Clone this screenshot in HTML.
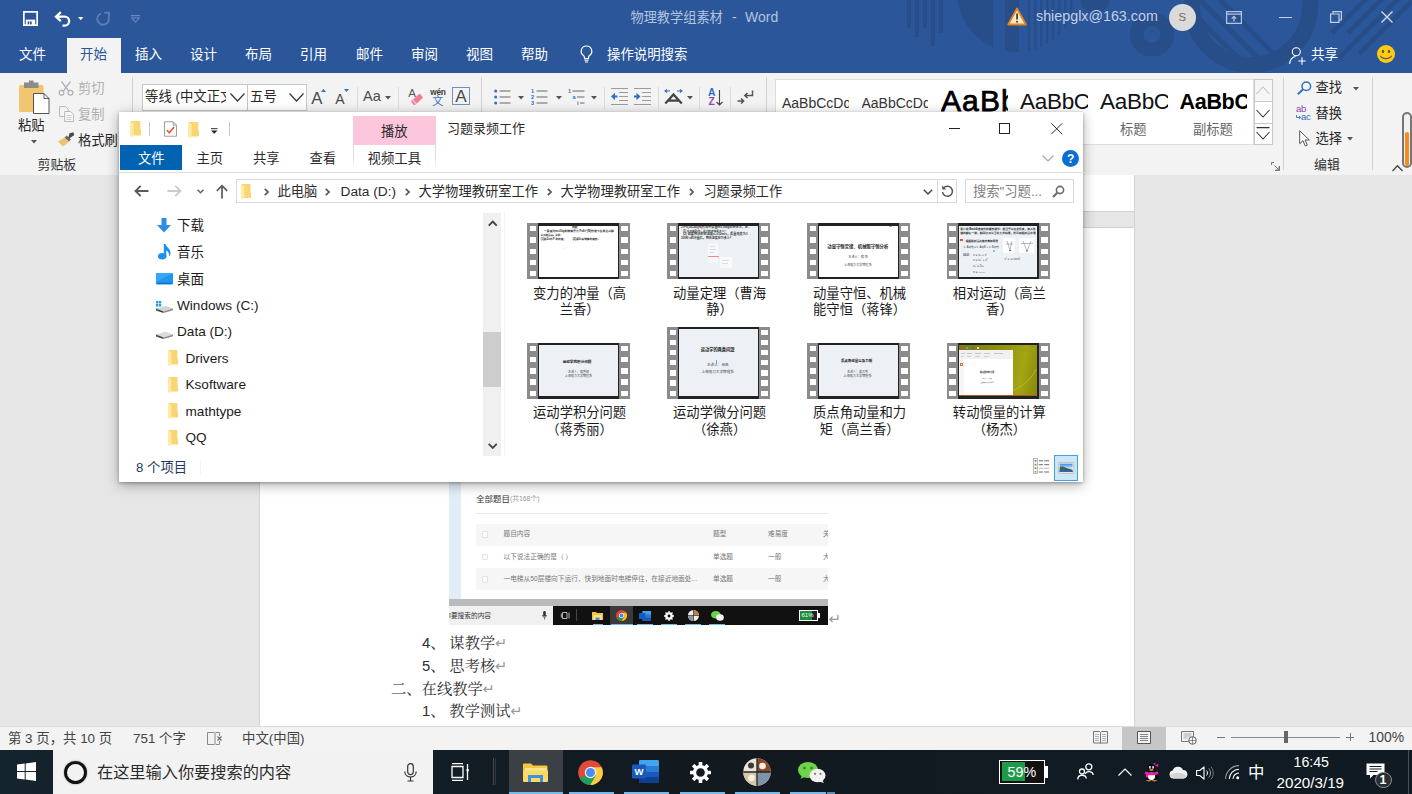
<!DOCTYPE html>
<html lang="zh-CN">
<head>
<meta charset="utf-8">
<title>物理教学组素材 - Word</title>
<style>
*{box-sizing:border-box;margin:0;padding:0}
html,body{width:1412px;height:794px;overflow:hidden;background:#e6e6e6}
body{font-family:"Liberation Sans","Noto Sans CJK SC",sans-serif;font-size:13.4px;color:#222;position:relative}
.abs{position:absolute}
.t{position:absolute;white-space:nowrap;line-height:1}
svg{position:absolute;overflow:visible}
/* ---------- Word title ---------- */
#title{left:0;top:0;width:1412px;height:72.500px;background:#2b579a;overflow:hidden}
#title .t{color:#fff}
.wtab{position:absolute;top:47.500px;font-size:14.6px;color:#fff;white-space:nowrap;line-height:1}
#seltab{left:67px;top:37.500px;width:53.500px;height:36px;background:#f3f3f3}
/* ---------- ribbon ---------- */
#ribbon{left:0;top:72px;width:1412px;height:103.500px;background:#f3f3f3;border-bottom:1px solid #d5d5d5}
.vsep{position:absolute;width:1px;background:#d2d2d2}
/* ---------- doc ---------- */
#doc{left:0;top:175px;width:1412px;height:551px;background:#e6e6e6}
#page{left:260px;top:0;width:873.500px;height:551px;background:#fff;box-shadow:-1px 0 0 #d4d4d4,1px 0 0 #d4d4d4}
.dl{position:absolute;white-space:nowrap;line-height:1;font-family:"Liberation Serif","Noto Serif CJK SC",serif;font-size:15.3px;color:#2e2e2e}
.pm{color:#9a9a9a;font-family:"DejaVu Sans",sans-serif;font-size:14.500px;line-height:1}
.dg{font-family:"Liberation Sans",sans-serif;font-size:14.800px}
/* ---------- status ---------- */
#status{left:0;top:726px;width:1412px;height:24px;background:#f3f3f3;border-top:1px solid #dcdcdc}
#status .t{color:#444;font-size:13.4px;top:5px}
/* ---------- taskbar ---------- */
#task{left:0;top:750px;width:1412px;height:44px;background:linear-gradient(90deg,#14242e 0,#14212b 60px,#131d25 470px,#12191f 720px,#111b23 1100px,#101a22 100%)}
/* ---------- explorer ---------- */
#exp{left:119px;top:112px;width:964px;height:369.500px;background:#fff;box-shadow:0 1px 3px rgba(0,0,0,.28),0 3px 12px rgba(0,0,0,.32)}
#expi{left:0;top:-1px;width:964px;height:370.500px}
#exp .t{color:#2b2b2b}
.nav{position:absolute;white-space:nowrap;line-height:1;font-size:13.5px;color:#1a1a1a}
.fl{position:absolute;width:130px;text-align:center;font-size:13.3px;line-height:16.8px;color:#1a1a1a}
</style>
</head>
<body>

<!-- ================= WORD TITLE BAR + TABS ================= -->
<div id="title" class="abs">
<!-- decorative pattern -->
<svg style="left:0;top:0" width="1412" height="72" viewBox="0 0 1412 72">
  <g fill="#284e8a">
    <rect x="907" y="0" width="4" height="28"/><rect x="915" y="0" width="4" height="37"/><rect x="923" y="0" width="4" height="28"/><rect x="931" y="0" width="4" height="46"/><rect x="939" y="0" width="4" height="33"/>
    <clipPath id="cpA"><circle cx="1017" cy="-8" r="60"/></clipPath>
    <g clip-path="url(#cpA)">
      <rect x="950" y="0" width="43" height="60"/><rect x="1005" y="0" width="14" height="60"/>
      <rect x="1028" y="0" width="2.4" height="60"/><rect x="1034" y="0" width="2.4" height="60"/><rect x="1040" y="0" width="2.4" height="60"/><rect x="1046" y="0" width="2.4" height="60"/><rect x="1052" y="0" width="2.4" height="60"/><rect x="1058" y="0" width="2.4" height="60"/><rect x="1064" y="0" width="2.4" height="60"/><rect x="1070" y="0" width="2.4" height="60"/>
    </g>
    <circle cx="1095" cy="-2" r="15"/>
    <path d="M1152 12.5a22 22 0 1 0 .01 0zM1152 26a8.5 8.5 0 1 1 -.01 0z" fill-rule="evenodd"/>
    <path d="M1251 -61a67 67 0 1 0 .01 0zM1251 -45a51 51 0 1 1 -.01 0z" fill-rule="evenodd"/>
    <clipPath id="cpB"><circle cx="1251" cy="6" r="51"/></clipPath>
    <g clip-path="url(#cpB)" stroke="#284e8a" stroke-width="5" fill="none">
      <path d="M1190 -10L1290 90M1200 -20L1300 80M1180 0L1280 100M1170 10L1270 110"/>
    </g>
    <g stroke="#284e8a" stroke-width="4.600" fill="none">
      <path d="M1332 33L1370 -5M1348 33L1386 -5M1339 58L1402 -5M1359 54L1418 -5"/>
    </g>
  </g>
</svg>
<!-- QAT icons -->
<svg style="left:23px;top:10.500px" width="15" height="15" viewBox="0 0 15 15"><path d="M.850 .850h13.300v13.300H.850z" fill="none" stroke="#fff" stroke-width="1.700"/><rect x="2.800" y="8.600" width="9.400" height="6" fill="#fff"/><rect x="4.600" y="10.400" width="1.700" height="3" fill="#2b579a"/><rect x="7" y="10.400" width="1.700" height="3" fill="#2b579a"/></svg>
<svg style="left:54px;top:10.500px" width="18" height="16" viewBox="0 0 18 16"><path d="M6.800 1.200L2 5.700l4.800 4.500M2.300 5.700h8.200a4.500 4.500 0 0 1 .3 9H8.500" fill="none" stroke="#fff" stroke-width="2.300"/></svg>
<svg style="left:78px;top:16.800px" width="5.500" height="3.500" viewBox="0 0 6 4"><path d="M0 0h6L3 3.600z" fill="#fff"/></svg>
<svg style="left:95px;top:11px" width="16" height="15" viewBox="0 0 16 15"><path d="M5.800 2.600A5.800 5.800 0 1 0 13.600 6.200" fill="none" stroke="#5d7db9" stroke-width="1.900"/><path d="M9.300 1.600H14V6.300" fill="none" stroke="#5d7db9" stroke-width="1.900"/></svg>
<svg style="left:131px;top:14.500px" width="9" height="8" viewBox="0 0 9 8"><path d="M0 .600h9M.800 3h7.400L4.500 7z" fill="none" stroke="#6b89bf" stroke-width="1.100"/></svg>
<!-- title -->
<div class="t" style="left:630.500px;top:10.500px;font-size:13.200px;color:#b4c4df">物理教学组素材</div><div class="t" style="left:732px;top:10px;font-size:14px;color:#b4c4df">-</div><div class="t" style="left:745px;top:10px;font-size:14px;color:#b4c4df">Word</div>
<!-- account -->
<svg style="left:1007px;top:7px" width="20" height="19" viewBox="0 0 20 19"><path d="M10 1.5L18.8 17.5H1.2z" fill="#fce9c8" stroke="#e8851a" stroke-width="1.8" stroke-linejoin="round"/><rect x="9.2" y="6.5" width="1.7" height="6" fill="#3a3a3a"/><rect x="9.2" y="13.8" width="1.7" height="1.8" fill="#3a3a3a"/></svg>
<div class="t" style="left:1036px;top:9px;font-size:14.3px;color:#c4d0e6">shiepglx@163.com</div>
<div class="abs" style="left:1169px;top:4px;width:27px;height:27px;border-radius:50%;background:#dadada"></div>
<div class="t" style="left:1178.5px;top:11.5px;font-size:11.5px;color:#7a6a5a">S</div>
<!-- window buttons -->
<svg style="left:1226px;top:11px" width="16" height="13" viewBox="0 0 16 13"><path d="M.6.6h14.8v11.8H.6zM.6 3.2h14.8" fill="none" stroke="#b7c6e0" stroke-width="1.2"/><path d="M8 10.5V5.5M5.8 7.6L8 5.4l2.2 2.2" fill="none" stroke="#b7c6e0" stroke-width="1.2"/></svg>
<div class="abs" style="left:1279px;top:17px;width:13px;height:1.3px;background:#c3d0e6"></div>
<svg style="left:1330px;top:11px" width="12" height="12" viewBox="0 0 12 12"><path d="M.6 3h8.4v8.4H.6zM3 3V.6h8.4V9H9" fill="none" stroke="#c3d0e6" stroke-width="1.2"/></svg>
<svg style="left:1381px;top:11px" width="12" height="12" viewBox="0 0 12 12"><path d="M.5.5l11 11M11.500 .5l-11 11" fill="none" stroke="#d5def0" stroke-width="1.3"/></svg>
<!-- tabs -->
<div id="seltab" class="abs"></div>
<div class="wtab" style="left:19px;font-size:13.5px">文件</div>
<div class="wtab" style="left:80px;font-size:13.5px;color:#2b579a">开始</div>
<div class="wtab" style="left:135px;font-size:13.5px">插入</div>
<div class="wtab" style="left:190px;font-size:13.5px">设计</div>
<div class="wtab" style="left:245px;font-size:13.5px">布局</div>
<div class="wtab" style="left:300px;font-size:13.5px">引用</div>
<div class="wtab" style="left:356px;font-size:13.5px">邮件</div>
<div class="wtab" style="left:411px;font-size:13.5px">审阅</div>
<div class="wtab" style="left:466px;font-size:13.5px">视图</div>
<div class="wtab" style="left:521px;font-size:13.5px">帮助</div>
<svg style="left:580px;top:45px" width="13" height="18" viewBox="0 0 13 18"><path d="M6.5 1a5.2 5.2 0 0 0-3 9.5c.7.6 1 1.300 1 2.300v.7h4v-.7c0-1 .3-1.700 1-2.300A5.200 5.200 0 0 0 6.500 1z" fill="none" stroke="#fff" stroke-width="1.2"/><path d="M4.500 15.200h4M5 17h3" stroke="#fff" stroke-width="1.200" fill="none"/></svg>
<div class="wtab" style="left:607px;font-size:13.4px">操作说明搜索</div>
<svg style="left:1288.500px;top:47px" width="18" height="18" viewBox="0 0 18 18"><circle cx="7.300" cy="4.800" r="4" fill="none" stroke="#fff" stroke-width="1.100"/><path d="M.600 17c.300-4.500 2.800-7 6-7.500" fill="none" stroke="#fff" stroke-width="1.100"/><path d="M13 10.200v7.500M9.300 14h7.400" stroke="#fff" stroke-width="1.100"/></svg>
<div class="wtab" style="left:1311px;font-size:13.5px">共享</div>
<svg style="left:1376.200px;top:44.300px" width="20" height="20" viewBox="0 0 20 20"><circle cx="10" cy="10" r="9" fill="#fecb12"/><ellipse cx="7" cy="7.500" rx="1.200" ry="1.700" fill="#5c5848"/><ellipse cx="13" cy="7.500" rx="1.200" ry="1.700" fill="#5c5848"/><path d="M4.300 11.800c1.700 3.700 9.700 3.700 11.400 0" fill="none" stroke="#5c5848" stroke-width="1.100"/></svg>

</div>

<!-- ================= RIBBON ================= -->
<div id="ribbon" class="abs">
<!-- coordinates inside ribbon: y = pageY-72 -->
<div class="abs" style="left:0;top:0;width:67px;height:.600px;background:#2b579a"></div><div class="abs" style="left:120.500px;top:0;width:1291.500px;height:.600px;background:#2b579a"></div>
<!-- Clipboard group -->
<svg style="left:18px;top:8px" width="33" height="35" viewBox="0 0 33 35">
  <rect x="1" y="5" width="24.500" height="27" rx="1.500" fill="#f0c66e"/>
  <rect x="6" y="2.500" width="14.500" height="5.500" fill="#8c8c8c"/><rect x="11" y="0.500" width="4.500" height="4" fill="#8c8c8c"/>
  <path d="M15.500 13.500h10.500l5 5v15h-15.500z" fill="#fff" stroke="#555" stroke-width="1"/><path d="M26 13.500v5h5" fill="none" stroke="#555" stroke-width="1"/>
</svg>
<div class="t" style="left:18px;top:46.600px;font-size:13.300px;color:#262626">粘贴</div>
<svg style="left:31px;top:68px" width="6" height="4" viewBox="0 0 6 4"><path d="M0 0h6L3 3.400z" fill="#555"/></svg>
<svg style="left:58px;top:9px" width="16" height="15" viewBox="0 0 16 15"><path d="M3.500 0.500l7.500 10M12.500 0.500l-7.500 10" stroke="#b3b3b3" stroke-width="1.300" fill="none"/><circle cx="3.500" cy="11.800" r="2.400" fill="none" stroke="#b3b3b3" stroke-width="1.300"/><circle cx="12.500" cy="11.800" r="2.400" fill="none" stroke="#b3b3b3" stroke-width="1.300"/></svg>
<div class="t" style="left:78px;top:9.500px;font-size:13.300px;color:#b1b1b1">剪切</div>
<svg style="left:59px;top:34px" width="16" height="16" viewBox="0 0 16 16"><path d="M.600 .600h6l2.500 2.500v7.500h-8.500z" fill="#f6f6f6" stroke="#b9b9b9" stroke-width="1"/><path d="M5.600 5.500h6l3 3v7h-9z" fill="#f6f6f6" stroke="#b9b9b9" stroke-width="1"/><path d="M7.500 9.500h5M7.500 11.500h5M7.500 13.500h5" stroke="#c9c9c9" stroke-width=".800"/></svg>
<div class="t" style="left:78px;top:35.500px;font-size:13.300px;color:#b1b1b1">复制</div>
<svg style="left:57px;top:60px" width="18" height="15" viewBox="0 0 18 15"><path d="M12.500 1.200l3.800 -1 1 2.800-6.500 4.500z" fill="#4a4a4a"/><path d="M9.500 3.500l4.500 4-2.200 2.200-4.300-4z" fill="#6a6a6a"/><path d="M7.500 5.500L12 9.800 6 14.500 1 9.500z" fill="#ecc275"/></svg>
<div class="t" style="left:78px;top:61.500px;font-size:13.300px;color:#262626">格式刷</div>
<div class="t" style="left:37.500px;top:87px;font-size:12.900px;color:#333">剪贴板</div>
<div class="vsep" style="left:132px;top:5px;height:93px"></div>

<!-- Font group -->
<div class="abs" style="left:142px;top:12px;width:106px;height:27px;background:#fff;border:1px solid #c6c6c6"></div>
<div class="abs" style="left:247px;top:12px;width:60px;height:27px;background:#fff;border:1px solid #c6c6c6"></div>
<div class="abs" style="left:144px;top:13px;width:82px;height:25px;overflow:hidden"><div class="t" style="left:1px;top:5px;font-size:13.400px;color:#262626">等线 (中文正文)</div></div>
<svg style="left:230px;top:21px" width="15" height="9" viewBox="0 0 15 9"><path d="M.500 .500l7 7.500 7-7.500" fill="none" stroke="#333" stroke-width="1.200"/></svg>
<div class="t" style="left:250px;top:18px;font-size:13.400px;color:#262626">五号</div>
<svg style="left:288.500px;top:21px" width="15" height="9" viewBox="0 0 15 9"><path d="M.500 .500l7 7.500 7-7.500" fill="none" stroke="#333" stroke-width="1.200"/></svg>
<div class="t" style="left:311.300px;top:18.600px;font-size:16.800px;color:#4a4a4a">A</div>
<svg style="left:320.800px;top:17.200px" width="5" height="3" viewBox="0 0 5 3"><path d="M0 3h5L2.500 0z" fill="#2e6fc4"/></svg>
<div class="t" style="left:335.300px;top:19.800px;font-size:14px;color:#4a4a4a">A</div>
<svg style="left:344.300px;top:17.200px" width="5" height="3" viewBox="0 0 5 3"><path d="M0 0h5L2.500 3z" fill="#2e6fc4"/></svg>
<div class="vsep" style="left:357px;top:15px;height:22px;background:#dcdcdc"></div>
<div class="t" style="left:363px;top:16.500px;font-size:14.500px;color:#4a4a4a">Aa</div>
<svg style="left:385px;top:23.500px" width="6" height="4" viewBox="0 0 6 4"><path d="M0 0h6L3 3.400z" fill="#555"/></svg>
<div class="vsep" style="left:398px;top:15px;height:22px;background:#dcdcdc"></div>
<div class="t" style="left:408.300px;top:16.300px;font-size:11.500px;color:#555">A</div>
<svg style="left:411px;top:22px" width="12" height="11" viewBox="0 0 13 12"><g transform="rotate(-42 6.500 6)"><rect x="0" y="3" width="13" height="6" rx="1.300" fill="#ec7f95"/><rect x="2.200" y="3" width="1.100" height="6" fill="#fbe3e8"/></g></svg>
<div class="t" style="left:430.300px;top:15.600px;font-size:8.300px;color:#3a3a3a;font-weight:bold;letter-spacing:-.300px">wén</div>
<div class="t" style="left:432.300px;top:24px;font-size:11px;color:#2e6fc4">文</div>
<div class="abs" style="left:452px;top:15.200px;width:18px;height:17.600px;border:1px solid #6f8fc2"></div>
<div class="t" style="left:455.300px;top:15.600px;font-size:17.200px;color:#4a4a4a">A</div>
<div class="vsep" style="left:481px;top:5px;height:93px"></div>

<!-- Paragraph group -->
<svg style="left:494px;top:17px" width="17" height="16" viewBox="0 0 17 16"><g fill="#2e6fc4"><circle cx="1.700" cy="2" r="1.500"/><circle cx="1.700" cy="8" r="1.500"/><circle cx="1.700" cy="14" r="1.500"/></g><path d="M5.500 2h11M5.500 8h11M5.500 14h11" stroke="#666" stroke-width="1"/></svg>
<svg style="left:518px;top:23.500px" width="6" height="4" viewBox="0 0 6 4"><path d="M0 0h6L3 3.400z" fill="#555"/></svg>
<svg style="left:531px;top:17px" width="18" height="16" viewBox="0 0 18 16"><g fill="#2e6fc4" font-family="Liberation Sans,sans-serif" font-size="5.500" font-weight="bold"><text x="0" y="4.200">1</text><text x="0" y="10">2</text><text x="0" y="15.800">3</text></g><path d="M5.500 2h11M5.500 8h11M5.500 14h11" stroke="#666" stroke-width="1"/></svg>
<svg style="left:556px;top:23.500px" width="6" height="4" viewBox="0 0 6 4"><path d="M0 0h6L3 3.400z" fill="#555"/></svg>
<svg style="left:568px;top:17px" width="18" height="16" viewBox="0 0 18 16"><g fill="#2e6fc4" font-family="Liberation Sans,sans-serif" font-size="5.500" font-weight="bold"><text x="0" y="4.200">1</text><text x="4.500" y="10">a</text><text x="9" y="15.800">i</text></g><path d="M4.500 2h12M9 8h7.500M12 14h4.500" stroke="#666" stroke-width="1"/></svg>
<svg style="left:590.500px;top:23.500px" width="6" height="4" viewBox="0 0 6 4"><path d="M0 0h6L3 3.400z" fill="#555"/></svg>
<div class="vsep" style="left:604px;top:15px;height:22px;background:#dcdcdc"></div>
<svg style="left:611px;top:16px" width="17" height="17" viewBox="0 0 17 17"><path d="M0 .500h17M8 4.500h9M8 8.500h9M8 12.500h9M0 16.500h17" stroke="#9c9c9c" stroke-width="1.100"/><path d="M6.500 8.500H2" fill="none" stroke="#2e6fc4" stroke-width="2"/><path d="M4 4.800L0 8.500l4 3.700z" fill="#2e6fc4"/></svg>
<svg style="left:634px;top:16px" width="17" height="17" viewBox="0 0 17 17"><path d="M0 .500h17M8 4.500h9M8 8.500h9M8 12.500h9M0 16.500h17" stroke="#9c9c9c" stroke-width="1.100"/><path d="M0 8.500h4.500" fill="none" stroke="#2e6fc4" stroke-width="2"/><path d="M2.500 4.800l4 3.700-4 3.700z" fill="#2e6fc4"/></svg>
<div class="vsep" style="left:658px;top:15px;height:22px;background:#dcdcdc"></div>
<svg style="left:664px;top:17px" width="19" height="15" viewBox="0 0 19 15"><path d="M1.300 14.500L9.500 5.500l8.200 9M4.500 11.700h10" fill="none" stroke="#444" stroke-width="2.200"/><path d="M1 2h5M3 .300L1 2l2 1.700M18 2h-5M16 .300l2 1.700-2 1.700" fill="none" stroke="#2e6fc4" stroke-width="1.100"/></svg>
<svg style="left:686.500px;top:23.500px" width="6" height="4" viewBox="0 0 6 4"><path d="M0 0h6L3 3.400z" fill="#555"/></svg>
<div class="vsep" style="left:699px;top:15px;height:22px;background:#dcdcdc"></div>
<div class="t" style="left:708px;top:16px;font-size:10.300px;font-weight:bold;color:#2e6fc4">A</div>
<div class="t" style="left:708.500px;top:24.500px;font-size:10.300px;font-weight:bold;color:#8e44ad">Z</div>
<svg style="left:716px;top:18px" width="7" height="16" viewBox="0 0 7 16"><path d="M3.500 0v15M.500 12l3 3 3-3" fill="none" stroke="#444" stroke-width="1.100"/></svg>
<div class="vsep" style="left:730px;top:15px;height:22px;background:#dcdcdc"></div>
<svg style="left:737px;top:18px" width="17" height="15" viewBox="0 0 17 15"><path d="M15.500 .500v5H8M10.500 3l-2.700 2.500 2.700 2.500" fill="none" stroke="#555" stroke-width="1.500"/><path d="M.500 11h6M4 8.500l2.700 2.500L4 13.500" fill="none" stroke="#555" stroke-width="1.500"/></svg>
<div class="vsep" style="left:765.500px;top:5px;height:93px"></div>

<!-- Styles gallery -->
<div class="abs" style="left:775px;top:7px;width:479px;height:66px;background:#fff;border:1px solid #dedede"></div>
<div class="abs" style="left:782px;top:20px;width:66.600px;height:24px;overflow:hidden"><div class="t" style="left:0;top:4px;font-size:14px;color:#333">AaBbCcDd</div></div>
<div class="abs" style="left:861.500px;top:20px;width:66.600px;height:24px;overflow:hidden"><div class="t" style="left:0;top:4px;font-size:14px;color:#333">AaBbCcDd</div></div>
<div class="abs" style="left:941px;top:8px;width:67px;height:40px;overflow:hidden"><div class="t" style="left:0;top:5.500px;font-size:30px;color:#000;letter-spacing:1.100px;-webkit-text-stroke:.750px #000">AaBb</div></div>
<div class="abs" style="left:1020px;top:14px;width:67.500px;height:30px;overflow:hidden"><div class="t" style="left:0;top:5px;font-size:22.500px;color:#111;letter-spacing:-.300px">AaBbCc</div></div>
<div class="abs" style="left:1100px;top:14px;width:67.500px;height:30px;overflow:hidden"><div class="t" style="left:0;top:5px;font-size:22.500px;color:#111;letter-spacing:-.300px">AaBbCc</div></div>
<div class="abs" style="left:1179.500px;top:14px;width:67.500px;height:30px;overflow:hidden"><div class="t" style="left:0;top:6px;font-size:21.500px;font-weight:bold;color:#000;letter-spacing:-.300px">AaBbCc</div></div>
<div class="t" style="left:1120px;top:50.500px;font-size:13.300px;color:#666">标题</div>
<div class="t" style="left:1193px;top:50.500px;font-size:13.300px;color:#666">副标题</div>
<div class="abs" style="left:1253.500px;top:7px;width:19px;height:23px;border:1px solid #c8c8c8;background:#f6f6f6"></div>
<div class="abs" style="left:1253.500px;top:29px;width:19px;height:23px;border:1px solid #c8c8c8;background:#fff"></div>
<div class="abs" style="left:1253.500px;top:51px;width:19px;height:22px;border:1px solid #c8c8c8;background:#fff"></div>
<svg style="left:1256px;top:14px" width="14" height="9" viewBox="0 0 14 9"><path d="M.500 8l6.500-7 6.500 7" fill="none" stroke="#c0c0c0" stroke-width="1.100"/></svg>
<svg style="left:1256px;top:37px" width="14" height="9" viewBox="0 0 14 9"><path d="M.500 1l6.500 7 6.500-7" fill="none" stroke="#333" stroke-width="1.100"/></svg>
<svg style="left:1256px;top:55px" width="14" height="13" viewBox="0 0 14 13"><path d="M.500 .600h13M.500 5l6.500 7 6.500-7" fill="none" stroke="#333" stroke-width="1.100"/></svg>
<svg style="left:1271px;top:90px" width="9" height="9" viewBox="0 0 9 9"><path d="M.500 3V.500H3M8.500 4v4.500H4M3.500 3.500l4.500 4.500M8 4.500V8H4.500" fill="none" stroke="#777" stroke-width="1"/></svg>
<div class="vsep" style="left:1283px;top:5px;height:93px"></div>

<!-- Editing group -->
<svg style="left:1296.500px;top:9px" width="15" height="14" viewBox="0 0 15 14"><circle cx="9.300" cy="5.200" r="4.300" fill="none" stroke="#2e6fc4" stroke-width="1.500"/><path d="M6.200 8.300L.800 13.300" stroke="#2e6fc4" stroke-width="1.900"/></svg>
<div class="t" style="left:1315.500px;top:8.500px;font-size:13.300px;color:#262626">查找</div>
<svg style="left:1353px;top:14.500px" width="6" height="4" viewBox="0 0 6 4"><path d="M0 0h6L3 3.400z" fill="#555"/></svg>
<div class="t" style="left:1296px;top:32px;font-size:9.500px;color:#8e44ad;letter-spacing:-.200px">ab</div>
<div class="t" style="left:1301px;top:39.500px;font-size:9.500px;color:#2e6fc4;letter-spacing:-.200px">ac</div>
<svg style="left:1296px;top:43px" width="5" height="5" viewBox="0 0 5 5"><path d="M.500 0v2.500h4M3 .800l1.700 1.700L3 4.200" fill="none" stroke="#2e6fc4" stroke-width=".900"/></svg>
<div class="t" style="left:1315.500px;top:34.500px;font-size:13.300px;color:#262626">替换</div>
<svg style="left:1299px;top:57.500px" width="11" height="17" viewBox="0 0 11 17"><path d="M.700 .700v13l3.300-3 2.300 5.300 2-.900-2.300-5.100h4.300z" fill="#fff" stroke="#555" stroke-width="1" stroke-linejoin="round"/></svg>
<div class="t" style="left:1315.500px;top:59.500px;font-size:13.300px;color:#262626">选择</div>
<svg style="left:1346.500px;top:65px" width="6" height="4" viewBox="0 0 6 4"><path d="M0 0h6L3 3.400z" fill="#555"/></svg>
<div class="t" style="left:1314px;top:86.500px;font-size:12.900px;color:#333">编辑</div>
<div class="vsep" style="left:1371.500px;top:5px;height:93px"></div>
<div class="abs" style="left:1402px;top:40px;width:9.600px;height:56px;border:2px solid #757575;border-radius:5px;background:#f1f1f1"></div>
<div class="abs" style="left:1405px;top:60px;width:4px;height:33.500px;background:#fb8a1e;border-radius:2px"></div>
<svg style="left:1392px;top:93px" width="11" height="6.500" viewBox="0 0 11 6.500"><path d="M.500 6l5-5.300 5 5.300" fill="none" stroke="#444" stroke-width="1.300"/></svg>

</div>

<!-- ================= DOCUMENT ================= -->
<div id="doc" class="abs">
<div id="page" class="abs">
<!-- coords relative to page: x=pageX-260, y=pageY-175 -->
<div class="abs" style="left:0;top:35.500px;width:873.500px;height:17px;background:#e6e6e6;border-top:1px solid #cfcfcf;border-bottom:1px solid #cfcfcf"></div>
<div class="abs" style="left:188.500px;top:300px;width:379px;height:149.500px;background:#fff;overflow:hidden;font-family:'Liberation Sans','Noto Sans CJK SC',sans-serif">
  <div class="abs" style="left:0;top:0;width:12px;height:124px;background:#e2edf8"></div>
  <div class="t" style="left:27.500px;top:20px;font-size:8.500px;color:#333">全部题目</div>
  <div class="t" style="left:61.500px;top:21px;font-size:6.800px;color:#9a9a9a">(共168个)</div>
  <div class="abs" style="left:27.500px;top:38px;width:352px;height:1px;background:#e9e9e9"></div>
  <div class="abs" style="left:27.500px;top:48.500px;width:352px;height:22px;background:#f6f6f6"></div>
  <div class="abs" style="left:27.500px;top:93px;width:352px;height:22px;background:#f6f6f6"></div>
  <div class="abs" style="left:33px;top:56px;width:6.500px;height:6.500px;border:1px solid #e2e2e2;background:#fff;border-radius:1px"></div>
  <div class="abs" style="left:33px;top:78.500px;width:6.500px;height:6.500px;border:1px solid #e2e2e2;background:#fff;border-radius:1px"></div>
  <div class="abs" style="left:33px;top:101px;width:6.500px;height:6.500px;border:1px solid #e2e2e2;background:#fff;border-radius:1px"></div>
  <div class="t" style="left:55px;top:56px;font-size:6.700px;color:#777">题目内容</div>
  <div class="t" style="left:264.500px;top:56px;font-size:6.700px;color:#777">题型</div>
  <div class="t" style="left:319.500px;top:56px;font-size:6.700px;color:#777">难易度</div>
  <div class="t" style="left:374.500px;top:56px;font-size:6.700px;color:#777">关</div>
  <div class="t" style="left:55px;top:78.500px;font-size:6.700px;color:#777">以下说法正确的是（ ）</div>
  <div class="t" style="left:264.500px;top:78.500px;font-size:6.700px;color:#777">单选题</div>
  <div class="t" style="left:319.500px;top:78.500px;font-size:6.700px;color:#777">一般</div>
  <div class="t" style="left:374.500px;top:78.500px;font-size:6.700px;color:#777">大</div>
  <div class="t" style="left:55px;top:101px;font-size:6.700px;color:#777">一电梯从50层楼向下运行，快到地面时电梯停住，在接近地面处...</div>
  <div class="t" style="left:264.500px;top:101px;font-size:6.700px;color:#777">单选题</div>
  <div class="t" style="left:319.500px;top:101px;font-size:6.700px;color:#777">一般</div>
  <div class="t" style="left:374.500px;top:101px;font-size:6.700px;color:#777">大</div>
  <div class="abs" style="left:0;top:124px;width:379px;height:7px;background:#bababa"></div>
  <div class="abs" style="left:0;top:131px;width:104px;height:18.500px;background:#f0f0f0"></div>
  <div class="abs" style="left:104px;top:131px;width:275px;height:18.500px;background:#111"></div>
  <div class="t" style="left:-4.300px;top:137.500px;font-size:6.700px;color:#333">你要搜索的内容</div>
  <svg style="left:93px;top:136px" width="5" height="9" viewBox="0 0 5 9"><rect x="1.200" y="0" width="2.600" height="5.500" rx="1.300" fill="#333"/><path d="M.300 4c0 3 4.400 3 4.400 0M2.500 6.500v2" stroke="#333" stroke-width=".700" fill="none"/></svg>
  <svg style="left:112px;top:137px" width="9" height="7" viewBox="0 0 9 7"><path d="M1.500 .500h4.500v6h-4.500zM.300 1.500v4M8 .500v6" stroke="#ddd" stroke-width=".800" fill="none"/></svg>
  <div class="abs" style="left:127.500px;top:134px;width:.800px;height:12px;background:#444"></div>
  <div class="abs" style="left:161.500px;top:131px;width:23px;height:18.500px;background:#3b3b3b"></div>
  <!-- mini icons -->
  <svg style="left:143px;top:135.500px" width="11" height="9" viewBox="0 0 11 9"><path d="M0 1h4l1 1h6v7H0z" fill="#f3c53e"/><rect x="1.500" y="4" width="8" height="5" fill="#fbe38a"/><rect x="3.500" y="6.500" width="4" height="2.500" fill="#3c8fd8"/></svg>
  <svg style="left:167.500px;top:135px" width="11" height="11" viewBox="0 0 11 11"><circle cx="5.500" cy="5.500" r="5.500" fill="#db4437"/><path d="M5.500 5.500L.800 8.300A5.500 5.500 0 0 0 5.500 11l2.600-4z" fill="#0f9d58"/><path d="M5.500 5.500l2.700 1.500-2.700 4a5.500 5.500 0 0 0 4.800-8.200H5.500z" fill="#f4c20d"/><circle cx="5.500" cy="5.500" r="2.500" fill="#fff"/><circle cx="5.500" cy="5.500" r="1.900" fill="#4285f4"/></svg>
  <svg style="left:190px;top:135.500px" width="12" height="10" viewBox="0 0 12 10"><rect x="3.500" y="0" width="8.500" height="10" rx=".800" fill="#2b7cd3"/><rect x="3.500" y="0" width="8.500" height="3.300" fill="#41a5ee"/><rect x="3.500" y="6.600" width="8.500" height="3.400" fill="#185abd"/><rect x="0" y="2" width="6.500" height="6" rx=".600" fill="#185abd"/></svg>
  <svg style="left:215px;top:135.500px" width="10" height="10" viewBox="0 0 10 10"><circle cx="5" cy="5" r="3" fill="none" stroke="#fff" stroke-width="1.600"/><path d="M5 0v10M0 5h10M1.500 1.500l7 7M8.500 1.500l-7 7" stroke="#fff" stroke-width="1.300"/><circle cx="5" cy="5" r="1.400" fill="#111"/></svg>
  <svg style="left:239px;top:135px" width="11" height="11" viewBox="0 0 11 11"><circle cx="5.500" cy="5.500" r="5.500" fill="#eee"/><path d="M5.500 5.500V0a5.500 5.500 0 0 1 5.500 5.500z" fill="#c9783f"/><path d="M5.500 5.500H0A5.500 5.500 0 0 0 5.500 11z" fill="#8a98a8"/><path d="M5.500 0v11M0 5.500h11" stroke="#333" stroke-width=".700"/></svg>
  <svg style="left:262px;top:136px" width="13" height="10" viewBox="0 0 13 10"><ellipse cx="4.800" cy="3.800" rx="4.800" ry="3.800" fill="#6fd14a"/><ellipse cx="9" cy="6.500" rx="3.800" ry="3.200" fill="#f2f2f2"/></svg>
  <div class="abs" style="left:144px;top:148.700px;width:10px;height:.800px;background:#76b9ed"></div><div class="abs" style="left:162px;top:148.700px;width:22px;height:.800px;background:#76b9ed"></div><div class="abs" style="left:188px;top:148.700px;width:16px;height:.800px;background:#76b9ed"></div><div class="abs" style="left:212px;top:148.700px;width:16px;height:.800px;background:#76b9ed"></div><div class="abs" style="left:236px;top:148.700px;width:16px;height:.800px;background:#76b9ed"></div><div class="abs" style="left:260px;top:148.700px;width:16px;height:.800px;background:#76b9ed"></div>
  <div class="abs" style="left:350px;top:134.500px;width:19.500px;height:11px;border:1px solid #fff;background:#1e8e3e"></div>
  <div class="abs" style="left:363px;top:135.500px;width:5.500px;height:9px;background:#222"></div>
  <div class="abs" style="left:369.500px;top:137.500px;width:1.500px;height:5px;background:#fff"></div>
  <div class="t" style="left:353px;top:137.300px;font-size:6px;color:#fff">61%</div>
</div>
<div class="t pm" style="left:568.500px;top:437px;font-size:15px">↵</div>
<div class="dl" style="left:162px;top:459.800px"><span class="dg">4</span>、 谋教学<span class="pm">↵</span></div>
<div class="dl" style="left:162px;top:483px"><span class="dg">5</span>、 思考核<span class="pm">↵</span></div>
<div class="dl" style="left:131px;top:505.500px">二、在线教学<span class="pm">↵</span></div>
<div class="dl" style="left:162px;top:528px"><span class="dg">1</span>、 教学测试<span class="pm">↵</span></div>

</div>
</div>

<!-- ================= STATUS BAR ================= -->
<div id="status" class="abs">
<div class="t" style="left:8px">第 3 页，共 10 页</div>
<div class="t" style="left:133px">751 个字</div>
<svg style="left:207px;top:5px" width="16" height="13" viewBox="0 0 16 13"><path d="M7 .500H.500v12H7M9 .500h3.500v3.500M9 12.500h3.500V9" fill="none" stroke="#8a8a8a" stroke-width="1"/><path d="M8 0v13" stroke="#8a8a8a" stroke-width="1"/><path d="M10.500 4.500l4 4M14.500 4.500l-4 4" stroke="#666" stroke-width="1.100"/></svg>
<div class="t" style="left:242px">中文(中国)</div>
<svg style="left:1093px;top:3.500px" width="15" height="13" viewBox="0 0 15 13"><path d="M.500 .500h6l1 1 1-1h6v11.500h-6l-1 .500-1-.500h-6zM7.500 1.500v11" fill="none" stroke="#777" stroke-width="1"/><path d="M2 3.500h4M2 5.500h4M2 7.500h4M2 9.500h4M9 3.500h4M9 5.500h4M9 7.500h4M9 9.500h4" stroke="#999" stroke-width=".700"/></svg>
<div class="abs" style="left:1122px;top:0;width:44px;height:23px;background:#c6c6c6"></div>
<svg style="left:1137px;top:3.500px" width="14" height="13" viewBox="0 0 14 13"><path d="M.500 .500h13v12H.500z" fill="#f3f3f3" stroke="#555" stroke-width="1"/><path d="M3 3.500h8M3 5.500h8M3 7.500h8M3 9.500h8" stroke="#666" stroke-width=".800"/></svg>
<svg style="left:1181px;top:3.500px" width="16" height="14" viewBox="0 0 16 14"><path d="M.500 .500h12v10H.500z" fill="none" stroke="#777" stroke-width="1"/><path d="M2.500 3h8M2.500 5h8M2.500 7h4" stroke="#999" stroke-width=".800"/><circle cx="11.500" cy="9.500" r="3.800" fill="#f3f3f3" stroke="#666" stroke-width="1"/><path d="M8 9.500h7M11.500 6v7" stroke="#666" stroke-width=".700"/></svg>
<div class="abs" style="left:1217px;top:9.700px;width:8px;height:1.200px;background:#777"></div>
<div class="abs" style="left:1231px;top:9.800px;width:109px;height:1px;background:#8a8a8a"></div>
<div class="abs" style="left:1283.500px;top:4px;width:4.500px;height:12px;background:#666"></div>
<div class="abs" style="left:1346px;top:9.800px;width:8px;height:1px;background:#777"></div><div class="abs" style="left:1349.500px;top:6.300px;width:1px;height:8px;background:#777"></div>
<div class="t" style="left:1368.500px;font-size:13.900px;top:4.300px">100%</div>

</div>

<!-- ================= TASKBAR ================= -->
<div id="task" class="abs">
<!-- coords relative to taskbar: y = pageY-750 -->
<svg style="left:17px;top:12px" width="19" height="19" viewBox="0 0 19 19"><path d="M0 2.600L7.700 1.500V9H0zM8.700 1.400L19 0v9H8.700zM0 10h7.700v7.500L0 16.400zM8.700 10H19v9L8.700 17.600z" fill="#fff"/></svg>
<div class="abs" style="left:53px;top:0;width:380px;height:44px;background:#f2f2f2"></div>
<div class="abs" style="left:64px;top:10.500px;width:23px;height:23px;border-radius:50%;border:3px solid #111;box-shadow:0 0 1.500px rgba(0,0,0,.6)"></div>
<div class="t" style="left:97px;top:14px;font-size:16.200px;color:#2b2b2b">在这里输入你要搜索的内容</div>
<svg style="left:404px;top:13px" width="13" height="19" viewBox="0 0 13 19"><rect x="3.700" y=".600" width="5.600" height="11" rx="2.800" fill="none" stroke="#333" stroke-width="1.200"/><path d="M.800 8.500c0 7.300 11.400 7.300 11.400 0M6.500 14v3.500M3.500 18h6" fill="none" stroke="#333" stroke-width="1.200"/></svg>
<svg style="left:449px;top:13px" width="20" height="18" viewBox="0 0 20 18"><path d="M3 3.500h11v11H3z" fill="none" stroke="#fff" stroke-width="1.300"/><path d="M3 .700h11M3 17.300h11M18.500 1v16" fill="none" stroke="#fff" stroke-width="1.300"/><rect x="17.500" y="6" width="2.300" height="2.300" fill="#fff"/></svg>
<div class="abs" style="left:492.500px;top:8px;width:1px;height:27px;background:#4a4d50"></div><div class="abs" style="left:494.500px;top:8px;width:1px;height:27px;background:#33373a"></div>
<div class="abs" style="left:509px;top:0;width:54px;height:44px;background:#3b4044"></div>
<!-- explorer -->
<svg style="left:523px;top:12px" width="25" height="20" viewBox="0 0 25 20"><path d="M0 2.500a1 1 0 0 1 1-1h7l2 2h13.500a1 1 0 0 1 1 1V19H0z" fill="#f5c543"/><path d="M2 6h21.500v13H2z" fill="#fde58f"/><path d="M0 8.500h25V19a1 1 0 0 1-1 1H1a1 1 0 0 1-1-1z" fill="#fbd965"/><path d="M5 13h15v7H5z" fill="#3b94dd"/><path d="M8 16h9v4H8z" fill="#fbd965"/></svg>
<!-- chrome -->
<svg style="left:578px;top:9.500px" width="25" height="25" viewBox="0 0 25 25"><circle cx="12.500" cy="12.500" r="12.300" fill="#de4b3b"/><path d="M12.500 12.500L1.900 18.700A12.300 12.300 0 0 0 12.500 24.800L18 15.700z" fill="#19a15f"/><path d="M12.500 12.500H24.500A12.300 12.300 0 0 1 12.500 24.800L18.200 15.300z" fill="#fbcd3f"/><path d="M12.500 7.200H23.600A12.300 12.300 0 0 1 24.800 12.500 12.300 12.300 0 0 1 12.500 24.800L18.600 15z" fill="#fbcd3f"/><circle cx="12.500" cy="12.500" r="5.700" fill="#f4f4f4"/><circle cx="12.500" cy="12.500" r="4.500" fill="#4a8af4"/></svg>
<!-- word -->
<svg style="left:632px;top:10px" width="27" height="23" viewBox="0 0 27 23"><rect x="7" y="0" width="20" height="23" rx="1.500" fill="#2b7cd3"/><rect x="7" y="0" width="20" height="6" rx="1.500" fill="#41a5ee"/><rect x="7" y="6" width="20" height="6" fill="#2b7cd3"/><rect x="7" y="12" width="20" height="5.500" fill="#185abd"/><rect x="7" y="17" width="20" height="6" rx="1.500" fill="#103f91"/><rect x="0" y="4.500" width="14" height="14" rx="1.300" fill="#185abd"/><text x="7" y="15" font-size="9.500" font-weight="bold" fill="#fff" text-anchor="middle" font-family="Liberation Sans,sans-serif">W</text></svg>
<!-- settings gear -->
<svg style="left:690px;top:11.500px" width="21" height="21" viewBox="0 0 21 21"><g fill="#fff"><rect x="8.700" y="0" width="3.600" height="21" rx=".600"/><rect x="8.700" y="0" width="3.600" height="21" rx=".600" transform="rotate(45 10.500 10.500)"/><rect x="8.700" y="0" width="3.600" height="21" rx=".600" transform="rotate(90 10.500 10.500)"/><rect x="8.700" y="0" width="3.600" height="21" rx=".600" transform="rotate(135 10.500 10.500)"/><circle cx="10.500" cy="10.500" r="7.600"/></g><circle cx="10.500" cy="10.500" r="4.300" fill="#151a1e"/></svg>
<!-- ball -->
<svg style="left:743px;top:8px" width="28" height="28" viewBox="0 0 28 28"><circle cx="14" cy="14" r="13.700" fill="#e9e4dc"/><path d="M14 14V.300A13.700 13.700 0 0 1 27.700 14z" fill="#8a4a2a"/><path d="M14 14h13.700A13.700 13.700 0 0 1 14 27.700z" fill="#7f93a8"/><path d="M14 14H.300A13.700 13.700 0 0 0 14 27.700z" fill="#d8c7a6"/><path d="M14 .300v27.400M.300 14h27.400" stroke="#262626" stroke-width="1.300"/><circle cx="19.500" cy="8" r="3.300" fill="#f3ede6"/><circle cx="8" cy="7.500" r="3" fill="#3a3a3a"/><circle cx="8.500" cy="20" r="3.300" fill="#f6efe3"/></svg>
<!-- wechat -->
<svg style="left:798px;top:11.500px" width="28" height="21" viewBox="0 0 28 21"><ellipse cx="10" cy="8" rx="10" ry="8" fill="#6fd24a"/><path d="M4 13l-1.500 4 5-2.500z" fill="#6fd24a"/><circle cx="6.500" cy="6" r="1.300" fill="#2e8b1e"/><circle cx="13.500" cy="6" r="1.300" fill="#2e8b1e"/><ellipse cx="19.500" cy="13.500" rx="8" ry="6.800" fill="#f1f1f1"/><path d="M24 18l2 3-5-1.500z" fill="#f1f1f1"/><circle cx="17" cy="11.800" r="1.100" fill="#777"/><circle cx="22.500" cy="11.800" r="1.100" fill="#777"/></svg>
<!-- underlines -->
<div class="abs" style="left:509px;top:41.500px;width:54px;height:2.500px;background:#76b9ed"></div>
<div class="abs" style="left:568.500px;top:41.500px;width:45px;height:2.500px;background:#76b9ed"></div>
<div class="abs" style="left:624px;top:41.500px;width:45px;height:2.500px;background:#76b9ed"></div>
<div class="abs" style="left:679.500px;top:41.500px;width:45px;height:2.500px;background:#76b9ed"></div>
<div class="abs" style="left:735px;top:41.500px;width:44.500px;height:2.500px;background:#76b9ed"></div>
<div class="abs" style="left:789.500px;top:41.500px;width:36px;height:2.500px;background:#76b9ed"></div>
<div class="abs" style="left:826.500px;top:41.500px;width:8px;height:2.500px;background:#5c8fb8"></div>
<!-- battery -->
<div class="abs" style="left:999px;top:9.500px;width:46px;height:24px;border:1.700px solid #fff;background:#111"></div>
<div class="abs" style="left:1001.500px;top:12px;width:23px;height:19px;background:#1f9a48"></div>
<div class="abs" style="left:1045px;top:16px;width:3px;height:11.500px;background:#fff"></div>
<div class="t" style="left:1007.500px;top:14.500px;font-size:14.300px;color:#fff">59%</div>
<!-- people -->
<svg style="left:1077px;top:13px" width="18" height="17" viewBox="0 0 18 17"><circle cx="11.800" cy="3.800" r="3" fill="none" stroke="#fff" stroke-width="1.300"/><path d="M8.500 11c.300-3 6.500-3.500 7.500 0v1" fill="none" stroke="#fff" stroke-width="1.300"/><circle cx="5" cy="8.500" r="2.500" fill="none" stroke="#fff" stroke-width="1.300"/><path d="M.800 16.500c0-5.500 8-5.500 8.500-1" fill="none" stroke="#fff" stroke-width="1.300"/></svg>
<svg style="left:1118px;top:18px" width="14" height="8" viewBox="0 0 14 8"><path d="M.500 7.500L7 1l6.500 6.500" fill="none" stroke="#fff" stroke-width="1.200"/></svg>
<!-- QQ -->
<svg style="left:1144px;top:13px" width="15" height="18.500" viewBox="0 0 15 18.500"><ellipse cx="4.800" cy="17.300" rx="2.600" ry="1.100" fill="#f2a01e"/><ellipse cx="10.200" cy="17.300" rx="2.600" ry="1.100" fill="#f2a01e"/><path d="M7.500 7.500c-4 0-6.800 3.500-6.300 7 .300 2 1.500 2.700 2.300 2.700h8c.800 0 2-.700 2.300-2.700.500-3.500-2.300-7-6.300-7z" fill="#0d0d0d"/><ellipse cx="7.500" cy="5.200" rx="4.100" ry="4.200" fill="#0d0d0d"/><ellipse cx="7.500" cy="13.300" rx="3.600" ry="3.700" fill="#fff"/><path d="M1.300 8.600c3.800 1.500 8.600 1.500 12.400 0l.700 2.300c-4.200 1.800-9.600 1.800-13.800 0z" fill="#f21cb0"/><path d="M2.300 10.500l2.300.700-.900 3.600-2.200-.800z" fill="#f21cb0"/><ellipse cx="6" cy="4.400" rx=".950" ry="1.350" fill="#fff"/><ellipse cx="9" cy="4.400" rx=".950" ry="1.350" fill="#fff"/><circle cx="6.200" cy="4.700" r=".450" fill="#000"/><circle cx="8.800" cy="4.700" r=".450" fill="#000"/><ellipse cx="7.500" cy="6.900" rx="2.100" ry=".800" fill="#f2a01e"/><path d="M10.300 2.300L9 0l3 .600zM10.800 2.400l3.700-1.600-.600 3.300z" fill="#f21cb0"/></svg>
<!-- cloud -->
<svg style="left:1168.500px;top:15.500px" width="19" height="13" viewBox="0 0 19 13"><path d="M4.500 12.500a4 4 0 0 1-.800-7.900 5.500 5.500 0 0 1 10.300-.600 4.300 4.300 0 0 1 1 8.500z" fill="#f1f1f1"/><path d="M1 9.500c3-3 9-3.500 14-1.500l3 2.500-3 2H4.500z" fill="#d4d4d4"/></svg>
<!-- volume -->
<svg style="left:1195.500px;top:15.500px" width="18" height="14" viewBox="0 0 18 14"><path d="M.600 4.500h3.200L8 .800v12.400L3.800 9.500H.600z" fill="none" stroke="#fff" stroke-width="1.100" stroke-linejoin="round"/><path d="M10.500 4.500c1.300 1.300 1.300 3.700 0 5" fill="none" stroke="#fff" stroke-width="1"/><path d="M12.800 2.500c2.200 2.400 2.200 6.600 0 9" fill="none" stroke="#aaa" stroke-width="1"/><path d="M15 .800c3 3.400 3 9 0 12.400" fill="none" stroke="#777" stroke-width="1"/></svg>
<!-- wifi -->
<svg style="left:1224.500px;top:14.500px" width="15" height="15" viewBox="0 0 15 15"><path d="M.600 14A13.500 13.500 0 0 1 14 .600" fill="none" stroke="#9a9a9a" stroke-width="1.100"/><path d="M4.300 14A9.700 9.700 0 0 1 14 4.300" fill="none" stroke="#fff" stroke-width="1.100"/><path d="M8 14A6 6 0 0 1 14 8" fill="none" stroke="#fff" stroke-width="1.100"/><circle cx="12.700" cy="12.700" r="1.500" fill="#fff"/></svg>
<div class="t" style="left:1248px;top:13.800px;font-size:16.400px;color:#fff">中</div>
<div class="t" style="left:1293.500px;top:4.500px;font-size:14.200px;color:#fff">16:45</div>
<div class="t" style="left:1276.500px;top:24.500px;font-size:15.200px;color:#fff">2020/3/19</div>
<!-- notification -->
<svg style="left:1366px;top:13px" width="20" height="17" viewBox="0 0 20 17"><path d="M.500 .500h18v11.500h-11l-3.500 3.500v-3.500h-3.500z" fill="#fff"/><path d="M3.500 3.500h12M3.500 6h12M3.500 8.500h8" stroke="#151a1e" stroke-width="1"/></svg>
<div class="abs" style="left:1375px;top:21.500px;width:16.500px;height:16.500px;border-radius:50%;background:#2a2e32;border:1px solid #8a8d90"></div>
<div class="t" style="left:1379.500px;top:23.500px;font-size:12.500px;font-weight:bold;color:#fff">1</div>
<div class="abs" style="left:1407.500px;top:0;width:1px;height:44px;background:#4a4d50"></div>

</div>

<!-- ================= EXPLORER WINDOW ================= -->
<div id="exp" class="abs"><div id="expi" class="abs">
<!-- coords relative to explorer: x=pageX-119, y=pageY-111 -->
<!-- QAT -->
<svg style="left:11px;top:10px" width="11.500" height="16" viewBox="0 0 12 15" preserveAspectRatio="none"><path d="M.600 0h10.200v8.300h.700v5.300H3.600z" fill="#f7d673"/><path d="M0 .500L3.800 1.800v11.400L2.500 15 0 14z" fill="#ffe9a3"/></svg>
<div class="abs" style="left:29.500px;top:11px;width:1px;height:14px;background:#c9c9c9"></div>
<svg style="left:44.500px;top:10.300px" width="13.500" height="16" viewBox="0 0 14 16"><path d="M.500 .500h9l3.500 3.500v11.500H.500z" fill="#fff" stroke="#9a9a9a" stroke-width="1"/><path d="M9.500 .500v3.500h3.500" fill="none" stroke="#9a9a9a" stroke-width="1"/><path d="M3 9l2.500 3L10.500 6" fill="none" stroke="#e8562a" stroke-width="1.600"/></svg>
<svg style="left:68.500px;top:11px" width="11.500" height="16" viewBox="0 0 12 15" preserveAspectRatio="none"><path d="M.600 0h10.200v8.300h.700v5.300H3.600z" fill="#f7d673"/><path d="M0 .500L3.800 1.800v11.400L2.500 15 0 14z" fill="#ffe9a3"/></svg>
<svg style="left:91.500px;top:16.500px" width="6.500" height="6" viewBox="0 0 7 6"><path d="M0 .500h7" stroke="#222" stroke-width="1"/><path d="M0 2.500h7L3.500 6z" fill="#222"/></svg>
<div class="abs" style="left:110px;top:11px;width:1px;height:14px;background:#c9c9c9"></div>
<!-- contextual tab -->
<div class="abs" style="left:234px;top:5px;width:83px;height:29px;background:#fcc6dc"></div>
<div class="t" style="left:262px;top:13.500px;font-size:13.300px">播放</div>
<div class="t" style="left:328px;top:10.500px;font-size:13px">习题录频工作</div>
<!-- window controls -->
<div class="abs" style="left:829.500px;top:17px;width:11px;height:1px;background:#222"></div>
<div class="abs" style="left:880px;top:12px;width:11px;height:11px;border:1px solid #222"></div>
<svg style="left:932px;top:12px" width="11.500" height="11.500" viewBox="0 0 12 12"><path d="M.300 .300l11.400 11.400M11.700 .300L.300 11.700" stroke="#222" stroke-width="1" fill="none"/></svg>
<!-- ribbon tabs -->
<div class="abs" style="left:1px;top:34px;width:62px;height:25px;background:#0063b1"></div>
<div class="t" style="left:19px;top:41px;font-size:13.300px;color:#fff!important"><span style="color:#fff">文件</span></div>
<div class="t" style="left:77.500px;top:41px;font-size:13.300px">主页</div>
<div class="t" style="left:134px;top:41px;font-size:13.300px">共享</div>
<div class="t" style="left:190.500px;top:41px;font-size:13.300px">查看</div>
<div class="abs" style="left:234px;top:34px;width:1px;height:22px;background:linear-gradient(#dcdcdc,#dcdcdc 60%,#fff)"></div><div class="abs" style="left:316px;top:34px;width:1px;height:22px;background:linear-gradient(#dcdcdc,#dcdcdc 60%,#fff)"></div>
<div class="t" style="left:248.500px;top:41px;font-size:13.400px">视频工具</div>
<svg style="left:922.500px;top:44px" width="12" height="7" viewBox="0 0 12 7"><path d="M.500 .500L6 6l5.500-5.500" fill="none" stroke="#a6a6a6" stroke-width="1.200"/></svg>
<div class="abs" style="left:943px;top:39px;width:17px;height:17px;border-radius:50%;background:#0b6fd1"></div>
<div class="t" style="left:948px;top:41.500px;font-size:12px;font-weight:bold"><span style="color:#fff">?</span></div>
<div class="abs" style="left:0;top:60.500px;width:965px;height:1px;background:#dcdcdc"></div>
<!-- nav row -->
<svg style="left:15px;top:74px" width="15" height="12" viewBox="0 0 15 12"><path d="M14.500 6H1.700M6.700 .800L1.500 6l5.200 5.200" fill="none" stroke="#5a5a5a" stroke-width="1.900"/></svg>
<svg style="left:48px;top:74px" width="15" height="12" viewBox="0 0 15 12"><path d="M.500 6h12.800M8.300 .800L13.500 6l-5.200 5.200" fill="none" stroke="#cbcbcb" stroke-width="1.800"/></svg>
<svg style="left:77.500px;top:78px" width="7" height="5" viewBox="0 0 7 5"><path d="M.500 .700l3 3 3-3" fill="none" stroke="#666" stroke-width="1.600"/></svg>
<svg style="left:97px;top:72.500px" width="12" height="15" viewBox="0 0 12 15"><path d="M6 14.500V1.700M.800 6.900L6 1.700l5.200 5.200" fill="none" stroke="#5a5a5a" stroke-width="1.700"/></svg>
<div class="abs" style="left:117px;top:68px;width:720.500px;height:24px;border:1px solid #d9d9d9;background:#fff"></div>
<div class="abs" style="left:817.500px;top:68px;width:1px;height:24px;background:#d9d9d9"></div>
<svg style="left:122px;top:72.500px" width="10.500" height="15.500" viewBox="0 0 12 15" preserveAspectRatio="none"><path d="M.600 0h10.200v8.300h.700v5.300H3.600z" fill="#f7d673"/><path d="M0 .500L3.800 1.800v11.400L2.500 15 0 14z" fill="#ffe9a3"/></svg>
<svg style="left:144.500px;top:77px" width="5" height="8" viewBox="0 0 5 8"><path d="M.800 .800L4 4 .800 7.200" fill="none" stroke="#555" stroke-width="1.700"/></svg>
<div class="t" style="left:158.500px;top:73.500px;font-size:13.300px">此电脑</div>
<svg style="left:206px;top:77px" width="5" height="8" viewBox="0 0 5 8"><path d="M.800 .800L4 4 .800 7.200" fill="none" stroke="#555" stroke-width="1.700"/></svg>
<div class="t" style="left:221.500px;top:73.500px;font-size:13.700px">Data (D:)</div>
<svg style="left:286px;top:77px" width="5" height="8" viewBox="0 0 5 8"><path d="M.800 .800L4 4 .800 7.200" fill="none" stroke="#555" stroke-width="1.700"/></svg>
<div class="t" style="left:299.500px;top:73.500px;font-size:13.300px">大学物理教研室工作</div>
<svg style="left:428px;top:77px" width="5" height="8" viewBox="0 0 5 8"><path d="M.800 .800L4 4 .800 7.200" fill="none" stroke="#555" stroke-width="1.700"/></svg>
<div class="t" style="left:441.500px;top:73.500px;font-size:13.300px">大学物理教研室工作</div>
<svg style="left:570px;top:77px" width="5" height="8" viewBox="0 0 5 8"><path d="M.800 .800L4 4 .800 7.200" fill="none" stroke="#555" stroke-width="1.700"/></svg>
<div class="t" style="left:584.500px;top:73.500px;font-size:13.100px">习题录频工作</div>
<svg style="left:804px;top:77.500px" width="10" height="6" viewBox="0 0 10 6"><path d="M.800 .800L5 5 9.200 .800" fill="none" stroke="#444" stroke-width="1.500"/></svg>
<svg style="left:822px;top:73.500px;transform:scaleX(-1)" width="13" height="13" viewBox="0 0 13 13"><path d="M10.800 3.700A5 5 0 1 0 11.500 7" fill="none" stroke="#555" stroke-width="1.500"/><path d="M11.800 .500v4h-4z" fill="#555"/></svg>
<div class="abs" style="left:846px;top:68px;width:109px;height:24px;border:1px solid #d9d9d9;background:#fff"></div>
<div class="t" style="left:854px;top:73.500px;font-size:13.300px"><span style="color:#7d7d7d">搜索"习题...</span></div>
<svg style="left:932.500px;top:73.500px" width="13" height="13" viewBox="0 0 13 13"><circle cx="8" cy="5" r="3.600" fill="none" stroke="#6a6a6a" stroke-width="1.600"/><path d="M5.300 7.700L1 12" stroke="#6a6a6a" stroke-width="2.200"/></svg>
<!-- nav tree (coords relative to explorer) -->
<svg style="left:38px;top:107px" width="14" height="15" viewBox="0 0 14 15"><path d="M4.500 0h5v7h4.500L7 14.500 0 7h4.500z" fill="#2f8de4"/></svg>
<div class="nav" style="left:58px;top:107.500px">下载</div>
<svg style="left:39px;top:133px" width="13" height="16" viewBox="0 0 13 16"><ellipse cx="4.200" cy="12.300" rx="4.200" ry="3.300" fill="#1e90f0"/><path d="M5.800 12.500V0h1.700c.500 3 5 4.300 5 9 0 1.600-.700 2.900-1.600 3.600.900-3.200-1.300-5.600-2.600-6v5.900z" fill="#1e90f0"/></svg>
<div class="nav" style="left:58px;top:134.500px">音乐</div>
<svg style="left:37px;top:162px" width="17" height="12" viewBox="0 0 17 12"><rect x="0" y="0" width="17" height="11.500" rx=".800" fill="#1f96f2"/><path d="M0 0h17L0 9z" fill="#3aa6f7"/><rect x="1.500" y="9.800" width="14" height="1" fill="#0f5fae"/></svg>
<div class="nav" style="left:58px;top:162px">桌面</div>
<svg style="left:37px;top:189.500px" width="17" height="12" viewBox="0 0 17 12"><path d="M0 7.500l10-2.500 7 2.500-9.500 3z" fill="#d2d2d2"/><path d="M0 7.500l7.500 3v1.500L0 9.500z" fill="#3f3f3f"/><path d="M7.500 10.500l9.500-3v1.800L7.500 12z" fill="#8a8a8a"/><rect x="1" y="8.600" width="1.500" height=".800" fill="#39d353"/><path d="M0 0h2.300v2.500H0zM2.900 0h2.300v2.500H2.900zM0 3h2.300v2.500H0zM2.900 3h2.300v2.500H2.900z" fill="#19a3ec"/></svg>
<div class="nav" style="left:58px;top:187.500px;font-size:13.600px">Windows (C:)</div>
<svg style="left:37px;top:220px" width="17" height="8" viewBox="0 0 17 8"><path d="M0 3.500L9.500 .500l7.500 3-9.500 3z" fill="#dcdcdc"/><path d="M0 3.500l7.500 3v1.500L0 5.500z" fill="#3f3f3f"/><path d="M7.500 6.500l9.500-3v1.800L7.500 8z" fill="#8a8a8a"/><rect x="1" y="4.600" width="1.500" height=".800" fill="#39d353"/></svg>
<div class="nav" style="left:58px;top:214px;font-size:13.600px">Data (D:)</div>
<svg style="left:48.500px;top:239.0px" width="10.500" height="16" viewBox="0 0 12 15" preserveAspectRatio="none"><path d="M.600 0h10.200v8.300h.700v5.300H3.600z" fill="#f7d673"/><path d="M0 .500L3.800 1.800v11.400L2.500 15 0 14z" fill="#ffe9a3"/></svg>
<div class="nav" style="left:66.500px;top:240.500px;font-size:13.600px">Drivers</div>
<svg style="left:48.500px;top:265.5px" width="10.500" height="16" viewBox="0 0 12 15" preserveAspectRatio="none"><path d="M.600 0h10.200v8.300h.700v5.300H3.600z" fill="#f7d673"/><path d="M0 .500L3.800 1.800v11.400L2.500 15 0 14z" fill="#ffe9a3"/></svg>
<div class="nav" style="left:66.500px;top:267px;font-size:13.600px">Ksoftware</div>
<svg style="left:48.500px;top:292.0px" width="10.500" height="16" viewBox="0 0 12 15" preserveAspectRatio="none"><path d="M.600 0h10.200v8.300h.700v5.300H3.600z" fill="#f7d673"/><path d="M0 .500L3.800 1.800v11.400L2.500 15 0 14z" fill="#ffe9a3"/></svg>
<div class="nav" style="left:66.500px;top:293.500px;font-size:13.600px">mathtype</div>
<svg style="left:48.500px;top:318.5px" width="10.500" height="16" viewBox="0 0 12 15" preserveAspectRatio="none"><path d="M.600 0h10.200v8.300h.700v5.300H3.600z" fill="#f7d673"/><path d="M0 .500L3.800 1.800v11.400L2.500 15 0 14z" fill="#ffe9a3"/></svg>
<div class="nav" style="left:66.500px;top:320px;font-size:13.600px">QQ</div>
<!-- nav scrollbar -->
<div class="abs" style="left:364px;top:101.500px;width:18px;height:243.500px;background:#f0f0f0"></div><div class="abs" style="left:384.500px;top:101px;width:1px;height:244px;background:#f4f4f4"></div>
<div class="abs" style="left:364px;top:221px;width:18px;height:55px;background:#cdcdcd"></div>
<svg style="left:368.500px;top:108.500px" width="9.500" height="6.500" viewBox="0 0 9 6"><path d="M.700 5.200L4.500 1.400l3.800 3.800" fill="none" stroke="#444" stroke-width="1.800"/></svg>
<svg style="left:368.500px;top:331.500px" width="9.500" height="6.500" viewBox="0 0 9 6"><path d="M.700 .800L4.500 4.600 8.300 .800" fill="none" stroke="#444" stroke-width="1.800"/></svg>
<!-- status -->
<div class="t" style="left:17px;top:350px;font-size:13.300px"><span style="color:#22375e">8 个项目</span></div>
<div class="abs" style="left:81px;top:350px;width:1px;height:13px;background:#f3f3f3"></div>
<!-- view buttons -->
<svg style="left:914px;top:346.700px" width="17" height="16" viewBox="0 0 17 16"><rect x=".500" y=".500" width="4" height="15" fill="#fafafa" stroke="#b5b5b5" stroke-width=".900"/><rect x="1.700" y="2" width="1.600" height="1.600" fill="#3b78d8"/><rect x="1.700" y="5.800" width="1.600" height="1.600" fill="#7a7a2a"/><rect x="1.700" y="9.400" width="1.600" height="1.600" fill="#e0452a"/><rect x="1.700" y="13" width="1.600" height="1.600" fill="#6ab04c"/><path d="M5.800 2.800h4.200M11.300 2.800h4.700M5.800 6.700h4.200M11.300 6.700h4.700M5.800 14h4.200M11.300 14h4.700" stroke="#6a6a6a" stroke-width="1"/><path d="M5.800 10.300h4.200M11.300 10.300h4.700" stroke="#c4c4c4" stroke-width="1.300"/></svg>
<div class="abs" style="left:935px;top:344px;width:23.500px;height:26px;background:#cce7f6;border:1.500px solid #41a1e2"></div>
<svg style="left:939.300px;top:351.300px" width="16.200" height="11.800" viewBox="0 0 16.200 11.800"><defs><linearGradient id="sky" x1="0" y1="0" x2="0" y2="1"><stop offset="0" stop-color="#3f86e6"/><stop offset=".550" stop-color="#cfe4f6"/><stop offset="1" stop-color="#8fb0d8"/></linearGradient></defs><rect x=".400" y=".400" width="15.400" height="11" rx=".600" fill="#eee" stroke="#b9b9b9" stroke-width=".800"/><rect x="1.700" y="1.700" width="12.800" height="8.400" fill="url(#sky)"/><path d="M1.700 5c3-1.500 6 1 12.800 3v2.100H1.700z" fill="#3b6650"/><path d="M1.700 7.800c4-.500 8 .800 12.800 1.200v1.100H1.700z" fill="#3565a8"/></svg>
<!--FILES-START-->
<div class="abs" style="left:408.3px;top:112.0px;width:102.7px;height:56.3px;background:#8b8b8b"><div class="abs" style="left:11px;top:0;width:80.700px;height:56.3px;background:#222"></div><div class="abs" style="left:12.200px;top:2.500px;width:78.300px;height:51.3px;background:#fff;overflow:hidden"><div class="t" style="left:32.50px;top:0.52px;font-size:2.80px;font-weight:bold;"><span style="color:#222">例题</span></div><div class="t" style="left:4.50px;top:4.52px;font-size:2.85px;font-weight:bold;"><span style="color:#222">一质量为m=1kg的物体受力 F=6t² (N)作用下在原点从静</span></div><div class="t" style="left:1.30px;top:9.52px;font-size:2.43px;font-weight:bold;"><span style="color:#222">止开始运动。试求：</span></div><div class="t" style="left:1.30px;top:13.52px;font-size:2.67px;font-weight:bold;"><span style="color:#222">(1)前2s内 F 的冲量；　　　(2)第2s末物体的速度。</span></div><div class="abs" style="left:23.5px;top:22.5px;width:1.0px;height:1.0px;background:#ddd;"></div></div><div class="abs" style="left:2.400px;top:3.2px;width:6.800px;height:5.300px;background:#fff"></div><div class="abs" style="left:93.800px;top:3.2px;width:6.800px;height:5.300px;background:#fff"></div><div class="abs" style="left:2.400px;top:14.4px;width:6.800px;height:5.300px;background:#fff"></div><div class="abs" style="left:93.800px;top:14.4px;width:6.800px;height:5.300px;background:#fff"></div><div class="abs" style="left:2.400px;top:25.6px;width:6.800px;height:5.300px;background:#fff"></div><div class="abs" style="left:93.800px;top:25.6px;width:6.800px;height:5.300px;background:#fff"></div><div class="abs" style="left:2.400px;top:36.7px;width:6.800px;height:5.300px;background:#fff"></div><div class="abs" style="left:93.800px;top:36.7px;width:6.800px;height:5.300px;background:#fff"></div><div class="abs" style="left:2.400px;top:47.9px;width:6.800px;height:5.300px;background:#fff"></div><div class="abs" style="left:93.800px;top:47.9px;width:6.800px;height:5.300px;background:#fff"></div></div>
<div class="abs" style="left:548.3px;top:112.0px;width:102.7px;height:56.3px;background:#8b8b8b"><div class="abs" style="left:11px;top:0;width:80.700px;height:56.3px;background:#222"></div><div class="abs" style="left:12.200px;top:2.500px;width:78.300px;height:51.3px;background:#edf1f5;overflow:hidden"><div class="t" style="left:1.30px;top:0.52px;font-size:3.11px;font-weight:bold;"><span style="color:#333">力F=(30+4t)(N)作用于质量m=10kg的物体上。求：</span></div><div class="t" style="left:3.50px;top:5.52px;font-size:2.65px;font-weight:bold;"><span style="color:#333">(1) 在开始2s内，此力的冲量是多少？</span></div><div class="t" style="left:3.50px;top:7.52px;font-size:3.17px;font-weight:bold;"><span style="color:#333">(2) 如果物体的初速度v₀=10m/s，质量改变为1→</span></div><div class="t" style="left:1.50px;top:11.52px;font-size:3.01px;font-weight:bold;"><span style="color:#333">300N·s的冲量后，物体速度应为多少？</span></div><div class="abs" style="left:28.7px;top:17.4px;width:9.8px;height:20.2px;background:#f6f7f8;"></div><div class="abs" style="left:40.3px;top:31.2px;width:12.0px;height:11.4px;background:#f9f9f9;"></div><div class="abs" style="left:28.7px;top:30.7px;width:10.8px;height:0.6px;background:#e79080;"></div><div class="abs" style="left:30.5px;top:20.5px;width:5.0px;height:0.5px;background:#d8dbe0;"></div><div class="abs" style="left:30.5px;top:23.5px;width:6.0px;height:0.5px;background:#d8dbe0;"></div><div class="abs" style="left:30.5px;top:26.5px;width:4.0px;height:0.5px;background:#d8dbe0;"></div><div class="abs" style="left:42.5px;top:34.5px;width:7.0px;height:0.5px;background:#d8dbe0;"></div><div class="abs" style="left:42.5px;top:37.5px;width:6.0px;height:0.5px;background:#d8dbe0;"></div></div><div class="abs" style="left:2.400px;top:3.2px;width:6.800px;height:5.300px;background:#fff"></div><div class="abs" style="left:93.800px;top:3.2px;width:6.800px;height:5.300px;background:#fff"></div><div class="abs" style="left:2.400px;top:14.4px;width:6.800px;height:5.300px;background:#fff"></div><div class="abs" style="left:93.800px;top:14.4px;width:6.800px;height:5.300px;background:#fff"></div><div class="abs" style="left:2.400px;top:25.6px;width:6.800px;height:5.300px;background:#fff"></div><div class="abs" style="left:93.800px;top:25.6px;width:6.800px;height:5.300px;background:#fff"></div><div class="abs" style="left:2.400px;top:36.7px;width:6.800px;height:5.300px;background:#fff"></div><div class="abs" style="left:93.800px;top:36.7px;width:6.800px;height:5.300px;background:#fff"></div><div class="abs" style="left:2.400px;top:47.9px;width:6.800px;height:5.300px;background:#fff"></div><div class="abs" style="left:93.800px;top:47.9px;width:6.800px;height:5.300px;background:#fff"></div></div>
<div class="abs" style="left:688.2px;top:112.0px;width:102.7px;height:56.3px;background:#8b8b8b"><div class="abs" style="left:11px;top:0;width:80.700px;height:56.3px;background:#222"></div><div class="abs" style="left:12.200px;top:2.500px;width:78.300px;height:51.3px;background:#fff;overflow:hidden"><div class="t" style="left:7.90px;top:19.52px;font-size:4.36px;font-weight:bold;"><span style="color:#1a1a1a">动量守恒定律、机械能守恒分析</span></div><div class="t" style="left:28.90px;top:30.52px;font-size:3.15px;"><span style="color:#444">主讲人：蒋 锋</span></div><div class="t" style="left:24.40px;top:38.52px;font-size:3.11px;"><span style="color:#444">上海电力大学物理系</span></div><div class="abs" style="left:70.1px;top:0.0px;width:2.5px;height:1.0px;background:#ee8a7a;"></div></div><div class="abs" style="left:2.400px;top:3.2px;width:6.800px;height:5.300px;background:#fff"></div><div class="abs" style="left:93.800px;top:3.2px;width:6.800px;height:5.300px;background:#fff"></div><div class="abs" style="left:2.400px;top:14.4px;width:6.800px;height:5.300px;background:#fff"></div><div class="abs" style="left:93.800px;top:14.4px;width:6.800px;height:5.300px;background:#fff"></div><div class="abs" style="left:2.400px;top:25.6px;width:6.800px;height:5.300px;background:#fff"></div><div class="abs" style="left:93.800px;top:25.6px;width:6.800px;height:5.300px;background:#fff"></div><div class="abs" style="left:2.400px;top:36.7px;width:6.800px;height:5.300px;background:#fff"></div><div class="abs" style="left:93.800px;top:36.7px;width:6.800px;height:5.300px;background:#fff"></div><div class="abs" style="left:2.400px;top:47.9px;width:6.800px;height:5.300px;background:#fff"></div><div class="abs" style="left:93.800px;top:47.9px;width:6.800px;height:5.300px;background:#fff"></div></div>
<div class="abs" style="left:828.0px;top:112.0px;width:102.7px;height:56.3px;background:#8b8b8b"><div class="abs" style="left:11px;top:0;width:80.700px;height:56.3px;background:#222"></div><div class="abs" style="left:12.200px;top:2.500px;width:78.300px;height:51.3px;background:#edf2f6;overflow:hidden"><div class="t" style="left:1.00px;top:3.52px;font-size:2.76px;font-weight:bold;"><span style="color:#222">第八讲 Back&amp;连接件的速度调节：相当于从在文件夹，加入新</span></div><div class="t" style="left:1.00px;top:6.52px;font-size:2.80px;font-weight:bold;"><span style="color:#222">道的都标一张，制因分开从当长大外科用，外压到相对运中用</span></div><div class="abs" style="left:1.3px;top:13.5px;width:2.5px;height:2.3px;background:#e8523a;"></div><div class="t" style="left:6.50px;top:15.52px;font-size:2.69px;font-weight:bold;"><span style="color:#222">根据相对运动速度叠加原理</span></div><div class="t" style="left:4.30px;top:21.52px;font-size:2.59px;"><span style="color:#333">v⃗A对地 = v⃗A对B + v⃗B对地</span></div><div class="t" style="left:3.80px;top:28.52px;font-size:3.25px;"><span style="color:#333">因此</span></div><div class="t" style="left:13.80px;top:28.52px;font-size:3.19px;"><span style="color:#444">v = v₀ + v′</span></div><div class="t" style="left:13.80px;top:33.52px;font-size:3.17px;"><span style="color:#444">v = v₀′ + v″</span></div><div class="t" style="left:13.80px;top:39.52px;font-size:2.96px;"><span style="color:#444">v₀′ = 2v₀</span></div><div class="t" style="left:13.80px;top:45.52px;font-size:3.30px;"><span style="color:#444">v = ——</span></div><div class="t" style="left:45.20px;top:32.52px;font-size:3.33px;"><span style="color:#555">v′ = v₀tanθ</span></div><div class="abs" style="left:43.4px;top:12.4px;width:12.5px;height:14.7px;background:#fff;"></div><div class="abs" style="left:59.6px;top:12.4px;width:15.1px;height:14.7px;background:#fff;"></div><svg style="left:43.4px;top:12.4px" width="32" height="15" viewBox="0 0 32 15"><path d="M4 3l3 9M9 3l-2 9M3 6h7M20 3l4 10M28 3l-4 10M18 5.500h12" stroke="#777" stroke-width=".500" fill="none"/><path d="M6 12l1 1.600 1-1.600zM23 12.500l1 1.600 1-1.600z" fill="#333"/></svg><div class="abs" style="left:33.8px;top:24.5px;width:2.2px;height:2.2px;background:#58b7f0;border-radius:50%"></div></div><div class="abs" style="left:2.400px;top:3.2px;width:6.800px;height:5.300px;background:#fff"></div><div class="abs" style="left:93.800px;top:3.2px;width:6.800px;height:5.300px;background:#fff"></div><div class="abs" style="left:2.400px;top:14.4px;width:6.800px;height:5.300px;background:#fff"></div><div class="abs" style="left:93.800px;top:14.4px;width:6.800px;height:5.300px;background:#fff"></div><div class="abs" style="left:2.400px;top:25.6px;width:6.800px;height:5.300px;background:#fff"></div><div class="abs" style="left:93.800px;top:25.6px;width:6.800px;height:5.300px;background:#fff"></div><div class="abs" style="left:2.400px;top:36.7px;width:6.800px;height:5.300px;background:#fff"></div><div class="abs" style="left:93.800px;top:36.7px;width:6.800px;height:5.300px;background:#fff"></div><div class="abs" style="left:2.400px;top:47.9px;width:6.800px;height:5.300px;background:#fff"></div><div class="abs" style="left:93.800px;top:47.9px;width:6.800px;height:5.300px;background:#fff"></div></div>
<div class="abs" style="left:408.3px;top:231.8px;width:102.7px;height:56.2px;background:#8b8b8b"><div class="abs" style="left:11px;top:0;width:80.700px;height:56.2px;background:#222"></div><div class="abs" style="left:12.200px;top:2.500px;width:78.300px;height:51.2px;background:#edf1f5;overflow:hidden"><div class="t" style="left:23.20px;top:15.72px;font-size:3.60px;font-weight:bold;"><span style="color:#1a1a1a">运动学的积分问题</span></div><div class="t" style="left:28.40px;top:25.72px;font-size:3.01px;"><span style="color:#444">主讲人：蒋秀丽</span></div><div class="t" style="left:25.30px;top:29.72px;font-size:3.04px;"><span style="color:#444">上海电力大学物理系</span></div></div><div class="abs" style="left:2.400px;top:3.2px;width:6.800px;height:5.300px;background:#fff"></div><div class="abs" style="left:93.800px;top:3.2px;width:6.800px;height:5.300px;background:#fff"></div><div class="abs" style="left:2.400px;top:14.4px;width:6.800px;height:5.300px;background:#fff"></div><div class="abs" style="left:93.800px;top:14.4px;width:6.800px;height:5.300px;background:#fff"></div><div class="abs" style="left:2.400px;top:25.5px;width:6.800px;height:5.300px;background:#fff"></div><div class="abs" style="left:93.800px;top:25.5px;width:6.800px;height:5.300px;background:#fff"></div><div class="abs" style="left:2.400px;top:36.7px;width:6.800px;height:5.300px;background:#fff"></div><div class="abs" style="left:93.800px;top:36.7px;width:6.800px;height:5.300px;background:#fff"></div><div class="abs" style="left:2.400px;top:47.8px;width:6.800px;height:5.300px;background:#fff"></div><div class="abs" style="left:93.800px;top:47.8px;width:6.800px;height:5.300px;background:#fff"></div></div>
<div class="abs" style="left:548.3px;top:215.6px;width:102.7px;height:72.4px;background:#8b8b8b"><div class="abs" style="left:11px;top:0;width:80.700px;height:72.4px;background:#222"></div><div class="abs" style="left:12.200px;top:2.500px;width:78.300px;height:67.4px;background:#edf1f5;overflow:hidden"><div class="t" style="left:21.30px;top:18.92px;font-size:4.21px;font-weight:bold;"><span style="color:#1a1a1a">运动学的两类问题</span></div><div class="t" style="left:27.50px;top:34.92px;font-size:3.62px;"><span style="color:#444">主讲人：徐燕</span></div><div class="t" style="left:21.90px;top:41.92px;font-size:3.62px;"><span style="color:#444">上海电力大学物理系</span></div><div class="abs" style="left:36.1px;top:31.4px;width:0.8px;height:3.5px;background:#58a7f0;"></div></div><div class="abs" style="left:2.400px;top:3.2px;width:6.800px;height:5.300px;background:#fff"></div><div class="abs" style="left:93.800px;top:3.2px;width:6.800px;height:5.300px;background:#fff"></div><div class="abs" style="left:2.400px;top:13.3px;width:6.800px;height:5.300px;background:#fff"></div><div class="abs" style="left:93.800px;top:13.3px;width:6.800px;height:5.300px;background:#fff"></div><div class="abs" style="left:2.400px;top:23.5px;width:6.800px;height:5.300px;background:#fff"></div><div class="abs" style="left:93.800px;top:23.5px;width:6.800px;height:5.300px;background:#fff"></div><div class="abs" style="left:2.400px;top:33.6px;width:6.800px;height:5.300px;background:#fff"></div><div class="abs" style="left:93.800px;top:33.6px;width:6.800px;height:5.300px;background:#fff"></div><div class="abs" style="left:2.400px;top:43.7px;width:6.800px;height:5.300px;background:#fff"></div><div class="abs" style="left:93.800px;top:43.7px;width:6.800px;height:5.300px;background:#fff"></div><div class="abs" style="left:2.400px;top:53.9px;width:6.800px;height:5.300px;background:#fff"></div><div class="abs" style="left:93.800px;top:53.9px;width:6.800px;height:5.300px;background:#fff"></div><div class="abs" style="left:2.400px;top:64.0px;width:6.800px;height:5.300px;background:#fff"></div><div class="abs" style="left:93.800px;top:64.0px;width:6.800px;height:5.300px;background:#fff"></div></div>
<div class="abs" style="left:688.2px;top:231.8px;width:102.7px;height:56.2px;background:#8b8b8b"><div class="abs" style="left:11px;top:0;width:80.700px;height:56.2px;background:#222"></div><div class="abs" style="left:12.200px;top:2.500px;width:78.300px;height:51.2px;background:#edf1f5;overflow:hidden"><div class="t" style="left:21.50px;top:14.72px;font-size:3.50px;font-weight:bold;"><span style="color:#1a1a1a">质点角动量以及力矩</span></div><div class="t" style="left:27.60px;top:25.72px;font-size:3.01px;"><span style="color:#444">主讲人：高兰香</span></div><div class="t" style="left:23.90px;top:29.72px;font-size:3.17px;"><span style="color:#444">上海电力大学物理系</span></div></div><div class="abs" style="left:2.400px;top:3.2px;width:6.800px;height:5.300px;background:#fff"></div><div class="abs" style="left:93.800px;top:3.2px;width:6.800px;height:5.300px;background:#fff"></div><div class="abs" style="left:2.400px;top:14.4px;width:6.800px;height:5.300px;background:#fff"></div><div class="abs" style="left:93.800px;top:14.4px;width:6.800px;height:5.300px;background:#fff"></div><div class="abs" style="left:2.400px;top:25.5px;width:6.800px;height:5.300px;background:#fff"></div><div class="abs" style="left:93.800px;top:25.5px;width:6.800px;height:5.300px;background:#fff"></div><div class="abs" style="left:2.400px;top:36.7px;width:6.800px;height:5.300px;background:#fff"></div><div class="abs" style="left:93.800px;top:36.7px;width:6.800px;height:5.300px;background:#fff"></div><div class="abs" style="left:2.400px;top:47.8px;width:6.800px;height:5.300px;background:#fff"></div><div class="abs" style="left:93.800px;top:47.8px;width:6.800px;height:5.300px;background:#fff"></div></div>
<div class="abs" style="left:828.0px;top:231.8px;width:102.7px;height:56.2px;background:#8b8b8b"><div class="abs" style="left:11px;top:0;width:80.700px;height:56.2px;background:#222"></div><div class="abs" style="left:12.200px;top:2.500px;width:78.300px;height:51.2px;background:#8a8b0e;overflow:hidden"><div class="abs" style="left:0;top:0;width:78.300px;height:52px;background:linear-gradient(100deg,#7a7b0b 0%,#8d8e0e 45%,#a3a512 78%,#86870a 100%)"></div><svg style="left:0;top:0" width="77" height="52" viewBox="0 0 77 52"><path d="M40 52C60 44 72 36 77 24" stroke="#b9bd3a" stroke-width=".800" fill="none"/><path d="M30 5c15 3 30 3 47-2" stroke="#9ea024" stroke-width="1.500" fill="none" opacity=".700"/></svg><div class="abs" style="left:-0.5px;top:5.1px;width:54.0px;height:44.6px;background:#fff;"></div><div class="abs" style="left:-0.5px;top:5.1px;width:54.0px;height:9.1px;background:#f1f1f1;"></div><div class="abs" style="left:-0.5px;top:14.2px;width:5.3px;height:35.5px;background:#f6f6f6;"></div><div class="abs" style="left:0.8px;top:17.7px;width:2.8px;height:3.5px;background:#fff;border:.400px solid #d86a4a"></div><div class="abs" style="left:-0.5px;top:49.7px;width:77.8px;height:1.8px;background:#b4582a;"></div><div class="abs" style="left:1.8px;top:1.7px;width:2.0px;height:2.0px;background:#d44;"></div><div class="abs" style="left:7.3px;top:1.7px;width:2.0px;height:2.0px;background:#4ad;"></div><div class="abs" style="left:12.8px;top:1.7px;width:2.0px;height:2.0px;background:#46b;"></div><div class="abs" style="left:17.8px;top:1.7px;width:2.0px;height:2.0px;background:#ddd;"></div><div class="abs" style="left:1.8px;top:7.7px;width:4.0px;height:0.5px;background:#c7c7c7;"></div><div class="abs" style="left:7.8px;top:7.7px;width:5.0px;height:0.5px;background:#c7c7c7;"></div><div class="abs" style="left:15.8px;top:7.7px;width:6.0px;height:0.5px;background:#c7c7c7;"></div><div class="abs" style="left:24.8px;top:7.7px;width:6.0px;height:0.5px;background:#c7c7c7;"></div><div class="abs" style="left:34.8px;top:7.7px;width:9.0px;height:0.5px;background:#c7c7c7;"></div><div class="abs" style="left:1.8px;top:10.7px;width:3.0px;height:0.5px;background:#d0d0d0;"></div><div class="abs" style="left:7.8px;top:10.7px;width:4.0px;height:0.5px;background:#d0d0d0;"></div><div class="abs" style="left:15.8px;top:10.7px;width:5.0px;height:0.5px;background:#d0d0d0;"></div><div class="abs" style="left:24.8px;top:10.7px;width:5.0px;height:0.5px;background:#d0d0d0;"></div><div class="t" style="left:20.80px;top:25.72px;font-size:2.04px;font-weight:bold;"><span style="color:#1a1a1a">转动惯量的计算</span></div><div class="t" style="left:23.30px;top:32.72px;font-size:1.55px;"><span style="color:#555">主讲人：杨杰</span></div><div class="t" style="left:21.00px;top:36.72px;font-size:1.56px;"><span style="color:#555">上海电力大学物理系</span></div></div><div class="abs" style="left:2.400px;top:3.2px;width:6.800px;height:5.300px;background:#fff"></div><div class="abs" style="left:93.800px;top:3.2px;width:6.800px;height:5.300px;background:#fff"></div><div class="abs" style="left:2.400px;top:14.4px;width:6.800px;height:5.300px;background:#fff"></div><div class="abs" style="left:93.800px;top:14.4px;width:6.800px;height:5.300px;background:#fff"></div><div class="abs" style="left:2.400px;top:25.5px;width:6.800px;height:5.300px;background:#fff"></div><div class="abs" style="left:93.800px;top:25.5px;width:6.800px;height:5.300px;background:#fff"></div><div class="abs" style="left:2.400px;top:36.7px;width:6.800px;height:5.300px;background:#fff"></div><div class="abs" style="left:93.800px;top:36.7px;width:6.800px;height:5.300px;background:#fff"></div><div class="abs" style="left:2.400px;top:47.8px;width:6.800px;height:5.300px;background:#fff"></div><div class="abs" style="left:93.800px;top:47.8px;width:6.800px;height:5.300px;background:#fff"></div></div>
<div class="fl" style="left:395.6px;top:174.6px">变力的冲量（高<br>兰香）</div>
<div class="fl" style="left:535.6px;top:174.6px">动量定理（曹海<br>静）</div>
<div class="fl" style="left:675.6px;top:174.6px">动量守恒、机械<br>能守恒（蒋锋）</div>
<div class="fl" style="left:815.4px;top:174.6px">相对运动（高兰<br>香）</div>
<div class="fl" style="left:395.6px;top:294.0px">运动学积分问题<br>（蒋秀丽）</div>
<div class="fl" style="left:535.6px;top:294.0px">运动学微分问题<br>（徐燕）</div>
<div class="fl" style="left:675.6px;top:294.0px">质点角动量和力<br>矩（高兰香）</div>
<div class="fl" style="left:815.4px;top:294.0px">转动惯量的计算<br>（杨杰）</div>
<!--FILES-END-->
</div></div>

</body>
</html>
